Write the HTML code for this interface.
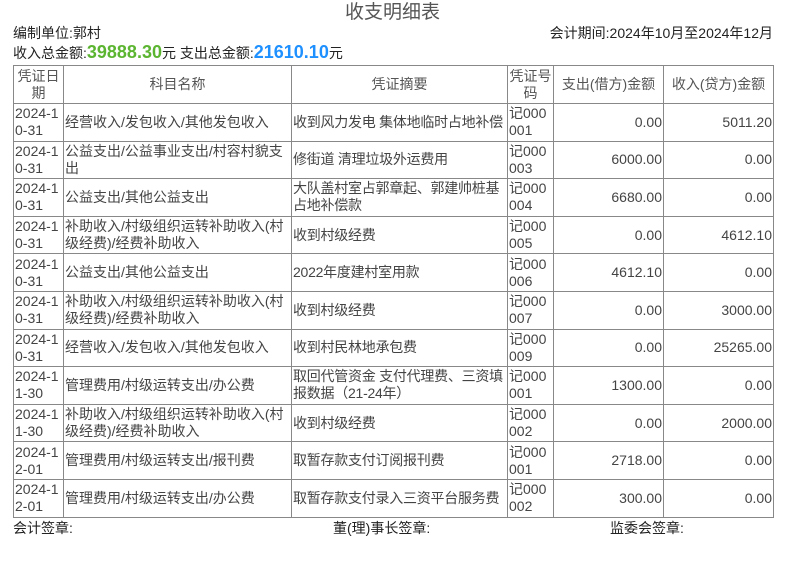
<!DOCTYPE html>
<html><head><meta charset="utf-8"><style>
body{margin:0;width:785px;height:562px;background:#fff;font-family:"Liberation Sans","Noto Sans CJK SC",sans-serif;color:#333;font-size:14px;position:relative;overflow:hidden}
.t{position:absolute;left:0;width:785px;top:1px;text-align:center;font-size:19px;color:#555;line-height:24px}
.a{position:absolute;font-size:14px;line-height:16px;color:#222}
table{position:absolute;left:13px;top:65px;border-collapse:collapse;table-layout:fixed;width:760px}
td,th{border:1px solid #888;padding:0 1px;font-size:14px;line-height:17px;vertical-align:middle;overflow:hidden;word-break:break-all}
th{font-weight:normal;color:#555;text-align:center;height:37px}
td{height:36.6px;color:#444}
td:nth-child(3){letter-spacing:-0.25px}
.r{text-align:right;padding-right:1px}
.g{color:#5cb531;font-weight:bold;font-size:18px}
.b{color:#1e90ff;font-weight:bold;font-size:18px}
</style></head><body>
<div class="t">收支明细表</div>
<div class="a" style="left:13px;top:25px">编制单位:郭村</div>
<div class="a" style="right:12px;top:25px">会计期间:2024年10月至2024年12月</div>
<div class="a" style="left:13px;top:44px">收入总金额:<span class="g">39888.30</span>元 支出总金额:<span class="b">21610.10</span>元</div>
<table>
<colgroup><col style="width:50px"><col style="width:228px"><col style="width:216px"><col style="width:46px"><col style="width:110px"><col style="width:110px"></colgroup>
<tr><th>凭证日期</th><th>科目名称</th><th>凭证摘要</th><th>凭证号码</th><th>支出(借方)金额</th><th>收入(贷方)金额</th></tr>
<tr><td>2024-10-31</td><td>经营收入/发包收入/其他发包收入</td><td>收到风力发电 集体地临时占地补偿</td><td>记000001</td><td class="r">0.00</td><td class="r">5011.20</td></tr>
<tr><td>2024-10-31</td><td>公益支出/公益事业支出/村容村貌支出</td><td>修街道 清理垃圾外运费用</td><td>记000003</td><td class="r">6000.00</td><td class="r">0.00</td></tr>
<tr><td>2024-10-31</td><td>公益支出/其他公益支出</td><td>大队盖村室占郭章起、郭建帅桩基占地补偿款</td><td>记000004</td><td class="r">6680.00</td><td class="r">0.00</td></tr>
<tr><td>2024-10-31</td><td>补助收入/村级组织运转补助收入(村级经费)/经费补助收入</td><td>收到村级经费</td><td>记000005</td><td class="r">0.00</td><td class="r">4612.10</td></tr>
<tr><td>2024-10-31</td><td>公益支出/其他公益支出</td><td>2022年度建村室用款</td><td>记000006</td><td class="r">4612.10</td><td class="r">0.00</td></tr>
<tr><td>2024-10-31</td><td>补助收入/村级组织运转补助收入(村级经费)/经费补助收入</td><td>收到村级经费</td><td>记000007</td><td class="r">0.00</td><td class="r">3000.00</td></tr>
<tr><td>2024-10-31</td><td>经营收入/发包收入/其他发包收入</td><td>收到村民林地承包费</td><td>记000009</td><td class="r">0.00</td><td class="r">25265.00</td></tr>
<tr><td>2024-11-30</td><td>管理费用/村级运转支出/办公费</td><td>取回代管资金 支付代理费、三资填报数据（21-24年）</td><td>记000001</td><td class="r">1300.00</td><td class="r">0.00</td></tr>
<tr><td>2024-11-30</td><td>补助收入/村级组织运转补助收入(村级经费)/经费补助收入</td><td>收到村级经费</td><td>记000002</td><td class="r">0.00</td><td class="r">2000.00</td></tr>
<tr><td>2024-12-01</td><td>管理费用/村级运转支出/报刊费</td><td>取暂存款支付订阅报刊费</td><td>记000001</td><td class="r">2718.00</td><td class="r">0.00</td></tr>
<tr><td>2024-12-01</td><td>管理费用/村级运转支出/办公费</td><td>取暂存款支付录入三资平台服务费</td><td>记000002</td><td class="r">300.00</td><td class="r">0.00</td></tr>
</table>
<div class="a" style="left:13px;top:520px">会计签章:</div>
<div class="a" style="left:333px;top:520px">董(理)事长签章:</div>
<div class="a" style="left:610px;top:520px">监委会签章:</div>
</body></html>
